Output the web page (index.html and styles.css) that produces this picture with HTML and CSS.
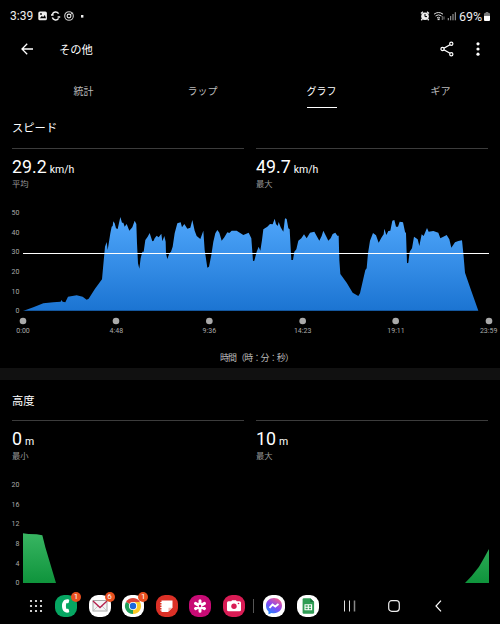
FILE: index.html
```html
<!DOCTYPE html>
<html lang="ja">

<head>
    <meta charset="UTF-8">
    <meta name="viewport" content="width=device-width, initial-scale=1.0">
    <title>その他</title>
    <link rel="stylesheet" href="styles.css">
</head>

<body>

    <div class="status-bar">
        <span class="clock">3:39</span>
        <svg class="status-left" width="48" height="12" viewBox="0 0 48 12">
            <rect x="0.3" y="1.5" width="8.6" height="8.8" rx="1.6" fill="#eee"/>
            <path d="M1.8 8.3l2-2.4 1.4 1.2L6.8 5 8 8.3z" fill="#000"/>
            <circle cx="3" cy="4" r="0.9" fill="#000"/>
            <path d="M20.6 3.6A3.6 3.6 0 0 0 14.3 4.4M14.3 7.6A3.6 3.6 0 0 0 20.6 8.4M13 5h2.6M19.6 7h2.6" fill="none" stroke="#eee" stroke-width="1.5"/>
            <circle cx="31" cy="6" r="4.3" fill="none" stroke="#ccc" stroke-width="1.1"/>
            <circle cx="31" cy="6" r="1.9" fill="none" stroke="#eee" stroke-width="1.1"/>
            <path d="M32.5 4.8l2-2" stroke="#eee"/>
            <rect x="43" y="5" width="2.4" height="2.6" fill="#eee"/>
        </svg>
        <svg class="status-right" width="38" height="12" viewBox="0 0 38 12">
            <circle cx="5" cy="6.3" r="3.8" fill="#eee"/>
            <path d="M1 3.5L3 1.8M9 3.5L7 1.8M2.3 9l-1 1.2M7.7 9l1 1.2" stroke="#eee" stroke-width="1.4"/>
            <path d="M5 4v2.6h2" fill="none" stroke="#000"/>
            <path d="M14 4.2q4.5-3.4 9 0M15.5 6q3-2.3 6 0M17 7.9q1.5-1.2 3 0" fill="none" stroke="#ddd" stroke-width="1"/>
            <rect x="17.6" y="8.5" width="2" height="1.6" fill="#ddd"/>
            <path d="M22.3 6v4M24 6.5v3" stroke="#777"/>
            <path d="M28.3 10.3V8M30.7 10.3V6M33 10.3V4M35.3 10.3V2.2" stroke="#aaa" stroke-width="1"/>
        </svg>
        <span class="percent">69%</span>
        <svg width="6" height="9" viewBox="0 0 6 9">
            <path d="M0 3V2q0-1 1-1h.7V0h2.6v1H5q1 0 1 1v1z" fill="#777"/>
            <path d="M0 3.5h6V8q0 1-1 1H1q-1 0-1-1z" fill="#fff"/>
        </svg>
    </div>

    <div class="app-bar">
        <svg width="12" height="12" viewBox="0 0 12 12">
            <path d="M12 6H1M6.2.8L1 6l5.2 5.2" fill="none" stroke="#fff" stroke-width="1.3"/>
        </svg>
        <h1>その他</h1>
        <svg class="share" width="14" height="16" viewBox="0 0 14 16">
            <path d="M11.3 3L2.6 8l8.7 5" fill="none" stroke="#fff" stroke-width="1.3"/>
            <circle cx="11.3" cy="2.8" r="1.6" fill="#000" stroke="#fff" stroke-width="1.2"/>
            <circle cx="2.5" cy="8" r="1.6" fill="#000" stroke="#fff" stroke-width="1.2"/>
            <circle cx="11.3" cy="13.2" r="1.6" fill="#000" stroke="#fff" stroke-width="1.2"/>
        </svg>
        <svg width="4" height="14" viewBox="0 0 4 14">
            <circle cx="2" cy="1.8" r="1.6" fill="#fff"/>
            <circle cx="2" cy="7" r="1.6" fill="#fff"/>
            <circle cx="2" cy="12.2" r="1.6" fill="#fff"/>
        </svg>
    </div>

    <div class="tabs">
        <a class="tab"><span>統計</span></a>
        <a class="tab"><span>ラップ</span></a>
        <a class="tab active"><span>グラフ</span></a>
        <a class="tab"><span>ギア</span></a>
    </div>

    <div class="section speed">
        <h2>スピード</h2>
        <div class="stats">
            <div class="stat">
                <div class="value"><span>29.2</span><small>km/h</small></div>
                <div class="label">平均</div>
            </div>
            <div class="stat">
                <div class="value"><span>49.7</span><small>km/h</small></div>
                <div class="label">最大</div>
            </div>
        </div>
        <svg class="chart" width="500" height="168" viewBox="0 0 1500 504">
            <defs>
                <linearGradient id="blue" gradientUnits="userSpaceOnUse" x1="0" y1="50" x2="0" y2="332">
                    <stop offset="0" stop-color="#4fa6fb"/>
                    <stop offset="1" stop-color="#1b74d2"/>
                </linearGradient>
            </defs>
            <path fill="url(#blue)" d="M69 332L75 331 100 322 130 310 160 307 182 305 184 300 188 305 196 307 204 290 230 286 248 290 260 299 266 296 285 266 306 238 309 205 315 140 320 126 323 150 331 100 335 80 338 78 340 64 344 70 348 85 353 87 361 51 366 68 370 68 374 80 380 72 388 92 397 82 404 62 409 72 411 130 414 190 418 206 422 175 427 155 431 155 436 120 443 110 449 99 457 124 461 122 464 115 470 107 476 112 484 101 487 124 493 108 497 125 498 160 502 177 508 160 513 155 518 140 524 100 532 70 542 67 546 82 553 72 562 86 571 83 577 60 584 92 590 108 601 117 610 92 614 150 622 203 627 200 634 165 640 125 646 100 652 90 658 98 665 122 673 112 682 97 688 99 695 92 710 92 730 105 746 98 754 115 759 183 763 182 770 155 776 140 781 152 786 120 790 88 802 80 810 72 818 73 824 56 828 72 833 78 836 66 842 82 850 95 855 55 860 57 865 85 869 88 874 180 879 180 883 155 889 148 895 122 904 115 912 103 920 115 930 98 943 95 950 108 958 122 965 108 970 92 978 108 985 122 992 115 998 102 1006 98 1012 107 1016 107 1018 180 1021 222 1040 248 1058 278 1075 288 1080 280 1096 210 1100 205 1104 160 1110 122 1119 99 1128 106 1136 128 1145 112 1151 103 1153 86 1159 105 1165 93 1171 92 1177 62 1183 60 1188 80 1194 80 1199 65 1209 67 1215 95 1218 100 1221 190 1225 188 1229 155 1236 145 1242 110 1253 118 1258 138 1265 103 1271 108 1281 84 1286 95 1300 93 1315 98 1321 115 1330 110 1340 105 1348 118 1354 143 1365 127 1375 123 1386 121 1390 160 1395 218 1410 262 1435 332Z"/>
            <rect x="69" y="159" width="1398" height="3" fill="#fff"/>
            <g class="axis y-axis">
                <text x="58" y="45">50</text>
                <text x="58" y="104">40</text>
                <text x="58" y="163">30</text>
                <text x="58" y="222">20</text>
                <text x="58" y="281">10</text>
                <text x="58" y="339">0</text>
            </g>
            <g fill="#aaa">
                <circle cx="69" cy="363" r="10"/>
                <circle cx="348" cy="363" r="10"/>
                <circle cx="628" cy="363" r="10"/>
                <circle cx="908" cy="363" r="10"/>
                <circle cx="1187" cy="363" r="10"/>
                <circle cx="1467" cy="363" r="10"/>
            </g>
            <g class="axis x-axis">
                <text x="69" y="399">0:00</text>
                <text x="349" y="399">4:48</text>
                <text x="628" y="399">9:36</text>
                <text x="908" y="399">14:23</text>
                <text x="1188" y="399">19:11</text>
                <text x="1466" y="399">23:59</text>
                <text class="axis-title" x="771" y="482" textLength="222">時間（時：分：秒）</text>
            </g>
        </svg>
    </div>

    <div class="section altitude">
        <h2>高度</h2>
        <div class="stats">
            <div class="stat">
                <div class="value"><span>0</span><small>m</small></div>
                <div class="label">最小</div>
            </div>
            <div class="stat">
                <div class="value"><span>10</span><small>m</small></div>
                <div class="label">最大</div>
            </div>
        </div>
        <svg class="chart" width="500" height="116" viewBox="0 0 1500 348">
            <defs>
                <linearGradient id="green" gradientUnits="userSpaceOnUse" x1="0" y1="185" x2="0" y2="332">
                    <stop offset="0" stop-color="#38b562"/>
                    <stop offset="1" stop-color="#0f943c"/>
                </linearGradient>
            </defs>
            <path fill="url(#green)" d="M69 184L85 186 110 187 127 190 136 226 168 333H69Z"/>
            <path fill="url(#green)" d="M1395 333L1415 312 1437 284 1450 262 1467 231V333Z"/>
            <g class="axis y-axis">
                <text x="58" y="46">20</text>
                <text x="58" y="105">16</text>
                <text x="58" y="163">12</text>
                <text x="58" y="222">8</text>
                <text x="58" y="281">4</text>
                <text x="58" y="339">0</text>
            </g>
        </svg>
    </div>

    <div class="dock">
        <svg class="apps" width="14" height="14" viewBox="0 0 14 14" fill="#fff">
            <circle cx="2" cy="2" r="1.1"/><circle cx="7" cy="2" r="1.1"/><circle cx="12" cy="2" r="1.1"/>
            <circle cx="2" cy="7" r="1.1"/><circle cx="7" cy="7" r="1.1"/><circle cx="12" cy="7" r="1.1"/>
            <circle cx="2" cy="12" r="1.1"/><circle cx="7" cy="12" r="1.1"/><circle cx="12" cy="12" r="1.1"/>
        </svg>
        <div class="app phone">
            <svg viewBox="0 0 22 22">
                <path d="M13.6 4.5c-4.3-.8-6.6 2.3-6.6 6.5s2.3 7.3 6.6 6.5c.5-.1.7-.4.6-.9l-.5-2.2c-.1-.5-.5-.7-1-.6l-1.2.2c-.8-1.900-.8-4.100 0-6l1.200.2c.5.1.9-.1 1-.6l.5-2.200c.1-.5-.1-.8-.6-.9z" fill="#fff"/>
            </svg>
            <span class="badge">1</span>
        </div>
        <div class="app mail">
            <svg viewBox="0 0 22 22">
                <rect x="4" y="5.5" width="14" height="10.5" fill="#f4f4f4" stroke="#aaa" stroke-width="1"/>
                <path d="M4.5 15.5l4.500-4.500M17.500 15.500L13 11" stroke="#bbb" stroke-width="0.8"/>
                <path d="M4 6l7 6.5L18 6" fill="none" stroke="#b51f4c" stroke-width="1.3"/>
            </svg>
            <span class="badge">6</span>
        </div>
        <div class="app chrome">
            <svg viewBox="0 0 22 22">
                <path d="M11 11L3.99 6.95A8.1 8.1 0 0 1 18.01 6.95Z" fill="#db4437"/>
                <path d="M11 11L18.01 6.95A8.1 8.1 0 0 1 11 19.1Z" fill="#fbc926"/>
                <path d="M11 11V19.1A8.1 8.1 0 0 1 3.99 6.95Z" fill="#1e9e57"/>
                <path d="M11 7H18.2L14.5 13 11 19.1Z" fill="#fbc926"/>
                <circle cx="11" cy="11" r="4.1" fill="#fff"/>
                <circle cx="11" cy="11" r="3.2" fill="#1a68dc"/>
            </svg>
            <span class="badge">1</span>
        </div>
        <div class="app notes">
            <svg viewBox="0 0 22 22">
                <path d="M5.5 5.5h11v7l-4.500 4.500h-6.500z" fill="#fff"/>
                <path d="M12.5 16.5v-3.800h3.800z" fill="#f4b4ae"/>
                <path d="M4.3 7.5h2M4.3 10h2M4.3 12.5h2M4.3 15h2" stroke="#fff" stroke-width="1"/>
            </svg>
        </div>
        <div class="app gallery">
            <svg viewBox="0 0 22 22">
                <path d="M11 5.8v10.4M6.5 8.4l9 5.2M15.5 8.4l-9 5.2" stroke="#fff" stroke-width="3" stroke-linecap="round"/>
                <circle cx="11" cy="11" r="1.2" fill="#c80b75"/>
            </svg>
        </div>
        <div class="app camera">
            <svg viewBox="0 0 22 22">
                <path d="M5.5 6.3h2.700l.9-1h3.800l.9 1h2.700q1.500 0 1.500 1.500v6.900q0 1.500-1.500 1.500h-11q-1.500 0-1.500-1.500V7.800q0-1.500 1.500-1.500z" fill="#fff"/>
                <circle cx="11" cy="11.300" r="2.700" fill="#d91c55"/>
                <circle cx="15.500" cy="8.500" r="0.800" fill="#d91c55"/>
            </svg>
        </div>
        <div class="divider"></div>
        <div class="app messenger">
            <svg viewBox="0 0 22 22">
                <defs>
                    <linearGradient id="msg" x1="0.2" y1="1" x2="0.8" y2="0">
                        <stop offset="0" stop-color="#1689ff"/>
                        <stop offset="0.5" stop-color="#8846f2"/>
                        <stop offset="1" stop-color="#fa5d83"/>
                    </linearGradient>
                </defs>
                <path d="M11 3c4.700 0 8 3.300 8 7.600s-3.300 7.600-8 7.600q-1.300 0-2.400-.3L5.500 19.200v-2.600C3.900 15.200 3 13.100 3 10.600 3 6.300 6.300 3 11 3z" fill="url(#msg)"/>
                <path d="M6.5 12.8l3-3.300 2.800 2 3.200-2.600" fill="none" stroke="#fff" stroke-width="1.9"/>
            </svg>
        </div>
        <div class="app sheets">
            <svg viewBox="0 0 22 22">
                <path d="M6.8 3.3h6.500l3.800 3.800v10.500q0 1.200-1.200 1.200H6.800q-1.200 0-1.200-1.200V4.500q0-1.200 1.200-1.200z" fill="#2f9c54"/>
                <path d="M13.3 3.3l3.800 3.800h-3.800z" fill="#17723a"/>
                <path d="M8 9.800h6.600v5H8zM8 12.300h6.600M11.300 9.800v5" fill="none" stroke="#fff" stroke-width="1.1"/>
            </svg>
        </div>
        <svg class="recents" width="12" height="12" viewBox="0 0 12 12">
            <path d="M.5.5v11M5.5.5v11" stroke="#ddd" stroke-width="1"/>
            <path d="M10.5.5v11" stroke="#888" stroke-width="1.5"/>
        </svg>
        <svg class="home" width="12" height="12" viewBox="0 0 12 12">
            <rect x="0.7" y="0.7" width="10.6" height="10.6" rx="3" fill="none" stroke="#eee" stroke-width="1.2"/>
        </svg>
        <svg class="back" width="7" height="12" viewBox="0 0 7 12">
            <path d="M6 .7L1 6l5 5.300" fill="none" stroke="#fff" stroke-width="1.2"/>
        </svg>
    </div>

</body>

</html>
```
FILE: styles.css
```css
* {
    box-sizing: border-box;
}

body {
    margin: 0;
    width: 500px;
    height: 624px;
    overflow: hidden;
    background-color: #000;
    color: #fff;
    font-family: Roboto, 'Noto Sans CJK JP', sans-serif;
    display: flex;
    flex-direction: column;
}

svg {
    display: block;
    flex-shrink: 0;
}

h1,
h2 {
    margin: 0;
    font-weight: 400;
}

.status-bar {
    height: 32px;
    padding: 0 10px;
    display: flex;
    align-items: center;
    font-size: 12px;
    color: #eee;
}

.clock {
    width: 28px;
}

.status-right {
    margin-left: auto;
}

.percent {
    width: 25px;
    margin-left: 1px;
    font-size: 12.5px;
}

.app-bar {
    height: 34px;
    padding: 0 20px 0 21px;
    display: flex;
    align-items: center;
}

.app-bar h1 {
    margin-left: 26px;
    font-size: 11.3px;
}

.share {
    margin-left: auto;
    margin-right: 22px;
}

.tabs {
    height: 44px;
    padding: 9px 0 0 24px;
    display: flex;
}

.tab {
    width: 119px;
    flex-shrink: 0;
    text-align: center;
    font-size: 10px;
    line-height: 33px;
    color: #bbb;
}

.tab span {
    display: inline-block;
    height: 33px;
}

.tab.active {
    color: #fff;
}

.tab.active span {
    border-bottom: 1px solid #fff;
}

.section h2 {
    height: 38px;
    padding-left: 12px;
    font-size: 11.3px;
    line-height: 38px;
}

.speed {
    height: 258px;
}

.stats {
    display: flex;
    gap: 12px;
    height: 52px;
    padding: 0 12px;
}

.stat {
    flex: 1;
    border-top: 1px solid #3c3c3c;
    padding-top: 7px;
}

.value {
    display: flex;
    align-items: baseline;
    gap: 3px;
    height: 22px;
    font-size: 17.8px;
    line-height: 22px;
}

.value small {
    font-size: 10.5px;
    line-height: 12px;
}

.label {
    height: 13px;
    font-size: 8.3px;
    line-height: 13px;
    color: #999;
}

.axis {
    font-size: 21px;
    fill: #aaa;
}

.y-axis {
    text-anchor: end;
}

.x-axis {
    text-anchor: middle;
}

.axis-title {
    font-size: 27px;
    fill: #bbb;
}

.altitude {
    border-top: 12px solid #111;
    height: 220px;
}

.altitude h2 {
    height: 40px;
    line-height: 43px;
}

.dock {
    height: 36px;
    padding-left: 29px;
    display: flex;
    align-items: center;
}

.apps {
    margin-right: 12px;
}

.app {
    position: relative;
    width: 22px;
    height: 22px;
    margin-right: 11.6px;
    border-radius: 9px;
    background-color: #fff;
    flex-shrink: 0;
}

.app svg {
    width: 22px;
    height: 22px;
}

.phone {
    background-color: #06a662;
}

.notes {
    background-color: #dc3026;
}

.gallery {
    background-color: #c80b75;
}

.camera {
    background-color: #d91c55;
    margin-right: 8px;
}

.badge {
    position: absolute;
    top: -3px;
    right: -4px;
    width: 10px;
    height: 10px;
    border-radius: 5px;
    background-color: #e8501f;
    font-size: 8px;
    line-height: 10px;
    text-align: center;
}

.divider {
    width: 1px;
    height: 14px;
    margin-right: 9px;
    background-color: #555;
}

.recents {
    margin-left: 14px;
}

.home {
    margin-left: 32px;
}

.back {
    margin-left: 35px;
}
```
